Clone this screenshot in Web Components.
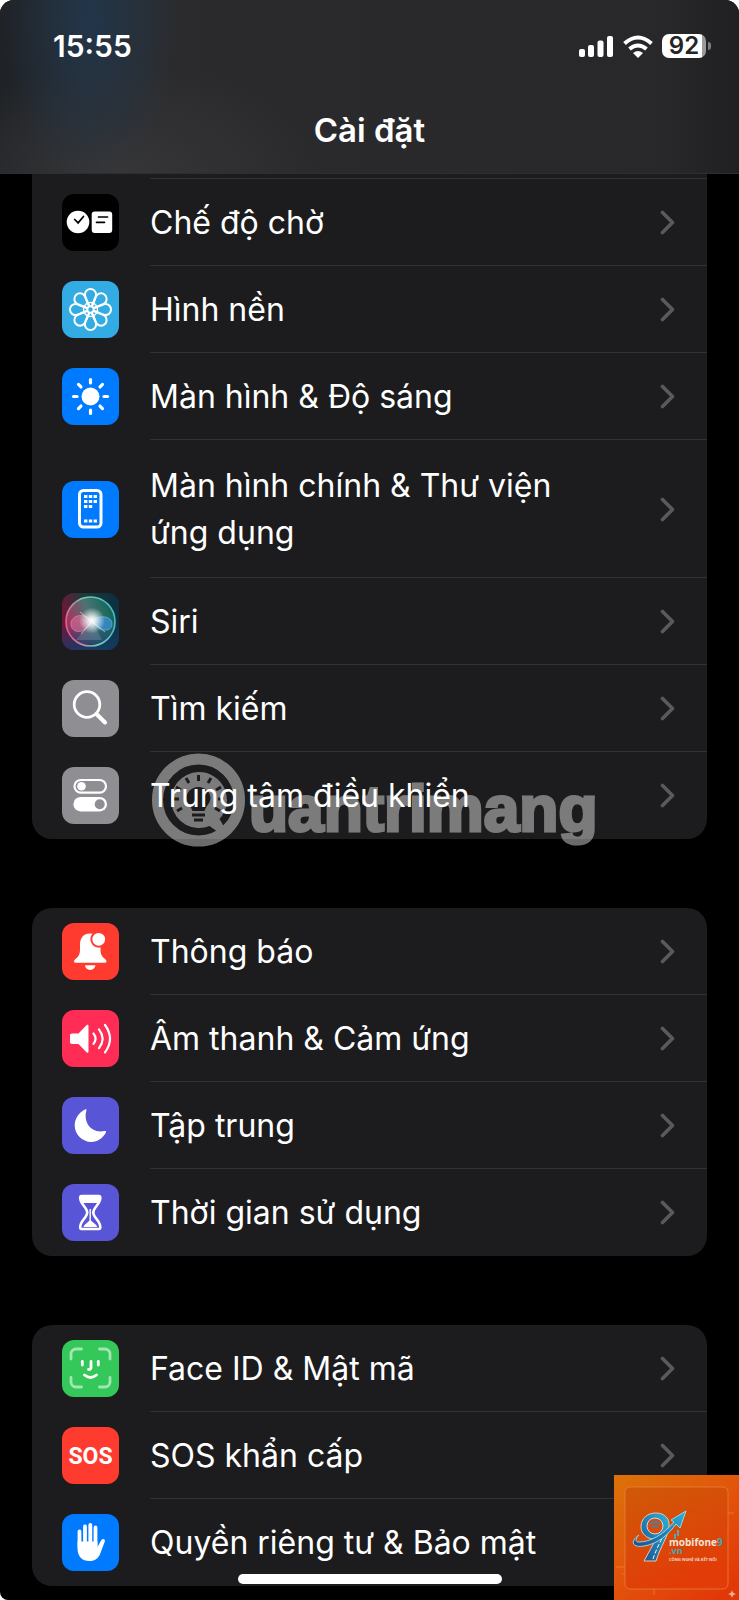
<!DOCTYPE html>
<html lang="vi">
<head>
<meta charset="utf-8">
<meta name="viewport" content="width=device-width, initial-scale=1">
<title>Cài đặt</title>
<style>
  body {
    margin: 0;
    background: #fff;
    font-family: Inter, "Liberation Sans", sans-serif;
    color: #fff;
  }
</style>
</head>
<body>

<settings-screen>
  <status-bar slot="header" time="15:55" battery="92"></status-bar>
  <span slot="title">Cài đặt</span>

  <settings-group continued>
    <settings-row icon="standby" color="#000">Chế độ chờ</settings-row>
    <settings-row icon="wallpaper" color="#32ace2">Hình nền</settings-row>
    <settings-row icon="sun" color="#007aff">Màn hình &amp; Độ sáng</settings-row>
    <settings-row icon="phone" color="#007aff" tall>Màn hình chính &amp; Thư viện ứng dụng</settings-row>
    <settings-row icon="siri" color="#1b2a3a">Siri</settings-row>
    <settings-row icon="search" color="#8e8e93">Tìm kiếm</settings-row>
    <settings-row icon="toggles" color="#8e8e93">Trung tâm điều khiển</settings-row>
    <water-mark slot="overlay">uantrimang</water-mark>
  </settings-group>

  <settings-group>
    <settings-row icon="bell" color="#ff3b30">Thông báo</settings-row>
    <settings-row icon="speaker" color="#ff2d55">Âm thanh &amp; Cảm ứng</settings-row>
    <settings-row icon="moon" color="#5856d6">Tập trung</settings-row>
    <settings-row icon="hourglass" color="#5856d6">Thời gian sử dụng</settings-row>
  </settings-group>

  <settings-group>
    <settings-row icon="face" color="#34c759">Face ID &amp; Mật mã</settings-row>
    <settings-row icon="sos" color="#ff3b30">SOS khẩn cấp</settings-row>
    <settings-row icon="hand" color="#007aff">Quyền riêng tư &amp; Bảo mật</settings-row>
  </settings-group>

  <brand-badge slot="badge"></brand-badge>
</settings-screen>

<script>
const turns = [0, 45, 90, 135, 180, 225, 270, 315];

const icons = {
  standby: `
    <circle cx="16" cy="28" r="11.3" fill="#fff"/>
    <rect x="29.7" y="17.5" width="20.5" height="21.5" rx="3" fill="#fff"/>
    <path d="M12.7 25.5l3.4 3.4 5.4-6.4M36.5 23h9M34.5 28.3h8" fill="none" stroke="#000" stroke-width="1.7" stroke-linecap="round"/>`,
  wallpaper: `
    <g fill="none" stroke="#fff" stroke-width="2">
      ${turns.map((deg) => `<path transform="rotate(${deg} 28.5 28.5)" d="M27 25.5C25.500 21 22.900 17.500 22.900 13.600a5.600 5.600 0 0 1 11.200 0C34.100 17.500 31.500 21 30 25.500"/>`).join("")}
      <circle cx="28.500" cy="28.500" r="3.200"/>
      <circle cx="28.500" cy="28.500" r="7" stroke-width="1.400"/>
    </g>`,
  sun: `
    <circle cx="28.5" cy="28.5" r="9" fill="#fff"/>
    <g stroke="#fff" stroke-width="3.2" stroke-linecap="round">
      ${turns.map((deg) => `<path transform="rotate(${deg} 28.5 28.5)" d="M28.5 11.5V15"/>`).join("")}
    </g>`,
  phone: `
    <rect x="17.5" y="9.5" width="21.5" height="36.5" rx="4" fill="none" stroke="#fff" stroke-width="3"/>
    <path d="M22 15.5h13M22 20.5h13M22 25.5h8.2M22 40h13" stroke="#fff" stroke-width="3.2" stroke-dasharray="3.4 1.4"/>`,
  siri: `
    <defs>
      <linearGradient id="back" x1="0" y1=".6" x2="1" y2=".4">
        <stop offset="0" stop-color="#7b1038"/><stop offset=".45" stop-color="#1f3a3a"/><stop offset="1" stop-color="#0c3040"/>
      </linearGradient>
      <radialGradient id="glow"><stop offset="0" stop-color="#fff"/><stop offset=".3" stop-color="#fff" stop-opacity=".8"/><stop offset="1" stop-color="#fff" stop-opacity="0"/></radialGradient>
      <linearGradient id="rim" x1="0" y1=".7" x2="1" y2=".4"><stop offset="0" stop-color="#f0568c"/><stop offset=".5" stop-color="#79c9ae"/><stop offset="1" stop-color="#46b8c8"/></linearGradient>
      <linearGradient id="orb" x1="0" y1=".6" x2="1" y2=".3"><stop offset="0" stop-color="#b8285c"/><stop offset=".5" stop-color="#4a7474"/><stop offset="1" stop-color="#0c6454"/></linearGradient>
      <linearGradient id="shade" x1="0" y1="0" x2="0" y2="1"><stop offset=".5" stop-color="#123c6c" stop-opacity="0"/><stop offset="1" stop-color="#123c6c" stop-opacity=".8"/></linearGradient>
    </defs>
    <rect width="57" height="57" fill="url(#back)"/>
    <rect width="57" height="57" fill="url(#shade)"/>
    <circle cx="28.5" cy="28.5" r="24.5" fill="url(#orb)"/>
    <circle cx="28.5" cy="28.5" r="24.5" fill="url(#shade)" stroke="url(#rim)" stroke-width="1.6"/>
    <path d="M30 28C22 19 9 22 9 31s13 12 21-3z" fill="#e8709c" fill-opacity=".55" stroke="#f08cb4" stroke-opacity=".6"/>
    <path d="M30 28c6-6 20-6 20 3s-14 8-20-3z" fill="#3c94e0" fill-opacity=".7" stroke="#6cc4f0" stroke-opacity=".6"/>
    <path d="M30 28L14 47h26z" fill="#9cb8c8" opacity=".25"/>
    <circle cx="30" cy="27.5" r="13" fill="url(#glow)"/>
    <path d="M18 19l25 20M30 28L19 41" stroke="#fff" opacity=".5"/>`,
  search: `
    <circle cx="25" cy="24.5" r="12.8" fill="none" stroke="#fff" stroke-width="2.8"/>
    <path d="M34.5 34l8.500 8.500" stroke="#fff" stroke-width="4" stroke-linecap="round"/>`,
  toggles: `
    <rect x="12.5" y="13" width="31.5" height="12.6" rx="6.3" fill="none" stroke="#fff" stroke-width="2.2"/>
    <circle cx="19.5" cy="19.3" r="4.3" fill="#fff"/>
    <rect x="11.4" y="30" width="33.6" height="14.4" rx="7.2" fill="#fff"/>
    <circle cx="37.7" cy="37.2" r="5" fill="#8e8e93"/>`,
  bell: `
    <path d="M28 10.5c-6.500 0-10 4.600-10 11v5c0 5-1.500 7-4.500 9.500-2.500 2.200-1.500 3.800.5 3.800h28.500c2 0 3-1.600.5-3.800-3-2.500-4.500-4.500-4.500-9.500v-5c0-6.400-3.500-11-10.500-11z" fill="#fff"/>
    <path d="M23 42.3h10.4a5.2 4.6 0 0 1-10.4 0z" fill="#fff"/>
    <circle cx="36.7" cy="16.3" r="7.4" fill="#fff" stroke="#ff3b30" stroke-width="2"/>`,
  speaker: `
    <path d="M10 23.5h6.500l8-8.300c.9-.9 2-.4 2 .8v25.500c0 1.200-1.100 1.700-2 .8l-8-8.300H10c-1.200 0-2-.8-2-2v-6.500c0-1.200.8-2 2-2z" fill="#fff"/>
    <path d="M31.500 23.500q4 5.200 0 10.400M37 19.300q7.200 9.400 0 18.800M43 15q10 13.700 0 27.400" fill="none" stroke="#fff" stroke-width="2.200" stroke-linecap="round"/>`,
  moon: `
    <path d="M23 12.5c1-.5 1.700 0 1.400 1.100C21 25 29 37 42.500 34c1.200-.3 1.900.4 1.400 1.500C41 41 35.500 45 29.500 45 20 45 12.700 37 12.700 28.500 12.700 21.500 17 15.500 23 12.500z" fill="#fff"/>`,
  hourglass: `
    <path d="M19.500 12h17.500c1.300 0 1.300 1 1.300 2 0 6-7 9.500-7 14.500s7 8.500 7 14.500c0 1 0 2-1.300 2H19.500c-1.300 0-1.300-1-1.300-2 0-6 7-9.500 7-14.500s-7-8.500-7-14.500c0-1 0-2 1.300-2z" fill="none" stroke="#fff" stroke-width="2.600"/>
    <path d="M18 12h20.500l-2.500 7H20.500z" fill="#fff"/>
    <path d="M28.200 25v13" stroke="#fff" stroke-width="1.400"/>
    <path d="M28.200 36l6 5 1 2H21.500l1-2z" fill="#fff"/>`,
  face: `
    <path d="M9 19v-5a5 5 0 0 1 5-5h5.500M37.500 9H43a5 5 0 0 1 5 5v5M48 37.500V42a5 5 0 0 1-5 5h-5.500M19.500 47H14a5 5 0 0 1-5-5v-4.500" fill="none" stroke="#a4e6b3" stroke-width="2.800" stroke-linecap="round"/>
    <path d="M20.300 21.500v3.500M36.300 21.500v3.500M29 21.500v6q0 2-2.500 2M22.500 35q6 5 12 0" fill="none" stroke="#fff" stroke-width="2.800" stroke-linecap="round"/>`,
  sos: `
    <text x="28.5" y="37" text-anchor="middle" fill="#fff" font-family="Roboto, 'Liberation Sans', sans-serif" font-weight="700" font-size="23">SOS</text>`,
  hand: `
    <path d="M17.500 17.500v16M23 12.500v18M28.300 11v19M33.500 13.500v18" stroke="#fff" stroke-width="3.800" stroke-linecap="round"/>
    <path d="M15.600 27.500h19.800v5.500l4-7c1.200-2 4.300-1 3.400 1.400L38.500 39c-2 5.500-5.500 8-11 8-7.500 0-11.900-4.500-11.900-12z" fill="#fff"/>`,
};

class SettingsScreen extends HTMLElement {
  constructor () {
    super();
    this.attachShadow({ mode: "open" });
    this.shadowRoot.innerHTML = `
      <style>
        :host {
          display: flex;
          flex-direction: column;
          position: relative;
          min-height: 100vh;
          background: #000;
          border-radius: 14px 14px 0 8px;
          overflow: hidden;
        }

        header {
          height: 174px;
          background:
            radial-gradient(ellipse 90px 160px at 90px 20px, rgba(34, 56, 78, .9), transparent),
            radial-gradient(ellipse 200px 110px at 120px 174px, #363638, transparent),
            linear-gradient(90deg, #1f2226, #2b2b2d 20%, #28282a 90%, #202022);
          box-sizing: border-box;
          border-bottom: 1px solid #2e2e30;
        }

        h1 {
          margin: 0;
          padding-top: 38px;
          text-align: center;
          font-size: 33px;
          line-height: 44px;
          font-weight: 600;
        }

        main {
          display: flex;
          flex-direction: column;
          gap: 69px;
          padding: 0 32px 14px;
        }

        .home-indicator {
          position: absolute;
          bottom: 16px;
          left: 50%;
          width: 264px;
          height: 10px;
          margin-left: -132px;
          border-radius: 5px;
          background: #fff;
        }
      </style>
      <header>
        <slot name="header"></slot>
        <h1><slot name="title"></slot></h1>
      </header>
      <main><slot></slot></main>
      <div class="home-indicator"></div>
      <slot name="badge"></slot>
    `;
  }
}

class StatusBar extends HTMLElement {
  constructor () {
    super();
    this.attachShadow({ mode: "open" });
    this.shadowRoot.innerHTML = `
      <style>
        :host {
          display: flex;
          align-items: center;
          justify-content: space-between;
          padding: 22px 28px 0 53px;
          height: 48px;
          font-weight: 600;
        }

        .time {
          font-size: 30px;
        }

        .indicators {
          display: flex;
          align-items: center;
          gap: 9px;
        }

        .battery {
          display: flex;
          align-items: center;
          gap: 2px;
        }

        .level {
          width: 44px;
          height: 24px;
          border-radius: 7px;
          background: linear-gradient(90deg, #fff 92%, #9a9a9c 92%);
          color: #242426;
          font-size: 24px;
          line-height: 24px;
          text-align: center;
        }

        .cap {
          width: 3px;
          height: 8px;
          border-radius: 0 3px 3px 0;
          background: #7d7d7f;
        }
      </style>
      <span class="time"></span>
      <div class="indicators">
        <svg width="35" height="23" viewBox="0 0 35 23" fill="#fff">
          <rect y="14" width="6" height="8" rx="2"/><rect x="9" y="10" width="6" height="12" rx="2"/>
          <rect x="18.5" y="5.5" width="6" height="16.5" rx="2"/><rect x="28" y="1" width="6" height="21" rx="2"/>
        </svg>
        <svg width="30" height="23" viewBox="0 0 30 23">
          <path d="M1.500 8.500q13.500-12 27 0M6.500 14q8.500-7 17 0" fill="none" stroke="#fff" stroke-width="4"/>
          <path d="M10 18q5-4 10 0l-5 5z" fill="#fff"/>
        </svg>
        <div class="battery"><div class="level"></div><div class="cap"></div></div>
      </div>
    `;
  }

  connectedCallback () {
    this.shadowRoot.querySelector(".time").textContent = this.getAttribute("time");
    this.shadowRoot.querySelector(".level").textContent = this.getAttribute("battery");
  }
}

class SettingsGroup extends HTMLElement {
  constructor () {
    super();
    this.attachShadow({ mode: "open" });
    this.shadowRoot.innerHTML = `
      <style>
        :host {
          display: block;
          position: relative;
          background: #1c1c1e;
          border-radius: 20px;
        }

        /* scrolled under the header: only the end of the row above is left */
        :host([continued]) {
          border-radius: 0 0 20px 20px;
        }

        .rest {
          display: none;
          height: 4px;
          margin-left: 118px;
          border-bottom: 1px solid #313134;
        }

        :host([continued]) .rest {
          display: block;
        }

        ::slotted(settings-row:last-of-type) {
          --divider: transparent;
        }
      </style>
      <div class="rest"></div>
      <slot></slot>
      <slot name="overlay"></slot>
    `;
  }
}

class SettingsRow extends HTMLElement {
  constructor () {
    super();
    this.attachShadow({ mode: "open" });
    this.shadowRoot.innerHTML = `
      <style>
        :host {
          display: block;
        }

        a {
          display: flex;
          align-items: center;
          gap: 31px;
          padding-left: 30px;
          color: inherit;
          text-decoration: none;
        }

        .icon {
          flex: none;
          width: 57px;
          height: 57px;
          border-radius: 12px;
        }

        .content {
          flex: 1;
          display: flex;
          align-items: center;
          justify-content: space-between;
          padding: 20px 32px 19px 0;
          border-bottom: 1px solid var(--divider, #313134);
        }

        :host([tall]) .content {
          padding: 22px 32px 21px 0;
        }

        .label {
          max-width: 420px;
          font-size: 32px;
          line-height: 47px;
        }

        .chevron {
          flex: none;
        }
      </style>
      <a href="#">
        <svg class="icon" viewBox="0 0 57 57" aria-hidden="true"></svg>
        <div class="content">
          <span class="label"><slot></slot></span>
          <svg class="chevron" width="15" height="25" viewBox="0 0 15 25" fill="none" stroke="#5a5a5e" stroke-width="3.600" stroke-linecap="round" stroke-linejoin="round"><path d="M2.500 2.500l10 10-10 10"/></svg>
        </div>
      </a>
    `;
  }

  connectedCallback () {
    const icon = this.shadowRoot.querySelector(".icon");
    icon.style.background = this.getAttribute("color");
    icon.innerHTML = icons[this.getAttribute("icon")];
  }
}

class WaterMark extends HTMLElement {
  constructor () {
    super();
    this.attachShadow({ mode: "open" });
    this.shadowRoot.innerHTML = `
      <style>
        :host {
          display: flex;
          position: absolute;
          left: 120px;
          bottom: -8px;
          gap: 3px;
          opacity: .42;
          pointer-events: none;
        }

        span {
          font-family: "Liberation Sans", sans-serif;
          font-size: 64px;
          line-height: 64px;
          font-weight: 700;
          padding-top: 24px;
          -webkit-text-stroke: 3px #fff;
        }
      </style>
      <svg width="94" height="94" viewBox="0 0 94 94">
        <mask id="bulb">
          <rect width="94" height="94" fill="#fff"/>
          <path d="M46.500 34c-7 0-12 5-12 11 0 5 4 7 6 13h12c2-6 6-8 6-13 0-6-5-11-12-11z" fill="#000"/>
          <path d="M46.500 22v6M34 25l3 5M59 25l-3 5M24 34l5 3M69 34l-5 3M21 46h6M66 46h6M25 58l5-3M68 58l-5-3M40 62h13M42 67h9" stroke="#000" stroke-width="3"/>
        </mask>
        <circle cx="46.5" cy="47" r="41" fill="none" stroke="#fff" stroke-width="11"/>
        <path d="M46.500 19a28 28 0 1 0 11 54l7 5c5 2 8-3 6-7l-3-5A28 28 0 0 0 46.500 19z" fill="#fff" mask="url(#bulb)"/>
      </svg>
      <span><slot></slot></span>
    `;
  }
}

class BrandBadge extends HTMLElement {
  constructor () {
    super();
    this.attachShadow({ mode: "open" });
    this.shadowRoot.innerHTML = `
      <style>
        :host {
          display: block;
          position: absolute;
          right: 0;
          bottom: 0;
          width: 125px;
          height: 125px;
        }

        svg {
          display: block;
        }
      </style>
      <svg width="125" height="125" viewBox="0 0 125 125">
        <defs>
          <linearGradient id="bg" x1="0" y1="0" x2=".8" y2="1"><stop offset="0" stop-color="#dc7208"/><stop offset=".5" stop-color="#e2560c"/><stop offset="1" stop-color="#e23808"/></linearGradient>
          <linearGradient id="panel" x1="0" y1="0" x2=".4" y2="1"><stop offset="0" stop-color="#cf5a08"/><stop offset="1" stop-color="#e23c08"/></linearGradient>
          <linearGradient id="blue" x1="0" y1="1" x2="1" y2="0"><stop offset="0" stop-color="#1c4f90"/><stop offset="1" stop-color="#28b4dc"/></linearGradient>
        </defs>
        <rect width="125" height="125" fill="url(#bg)"/>
        <path d="M85 35l18 4M104 38h16M2 92h16M8 99h22M40 108v12" stroke="#f08b3c" opacity=".6"/>
        <rect x="11" y="12" width="103" height="102" rx="5" fill="url(#panel)" stroke="#ea8640" stroke-opacity=".7"/>
        <path d="M30 86l12-22c-8 1-15-5-15-12 0-9 7-14 15-14 9 0 14 6 13 14-1 10-8 18-13 34z" fill="url(#blue)" stroke="#e8c8b0"/>
        <circle cx="41" cy="51" r="8" fill="#db4c0c" stroke="#d8d8d8"/>
        <path d="M36 49q5-4 10 0M38 52q3-2 6 0" fill="none" stroke="#3b86a5" stroke-width="2"/>
        <path d="M39 84q4-12 11-24" fill="none" stroke="#fff" stroke-dasharray="4 2"/>
        <path d="M25 60c-10 7-6 13 5 11 14-2 25-12 32-22l4 4 6-17-15 9 3 2C49 60 36 67 25 67c-4 0-4-3 0-7z" fill="url(#blue)" stroke="#9bd6e0"/>
        <path d="M64 55v6M61 59v5" stroke="#53a8b8" stroke-width="2"/>
        <g font-family="'Open Sans', sans-serif" font-weight="700">
          <text x="55" y="71" font-size="10" fill="#f2e4d8">mobifone<tspan fill="#45a8b8">9</tspan></text>
          <text x="55" y="79" font-size="9" fill="#45a8b8">.vn</text>
          <text x="55" y="86" font-size="4" fill="#f6d8c8">CÔNG NGHỆ VÀ KẾT NỐI</text>
        </g>
        <path d="M118 115q.5 3.500 4 4-3.500.5-4 4-.5-3.500-4-4 3.500-.5 4-4z" fill="#f8b49a"/>
      </svg>
    `;
  }
}

customElements.define("status-bar", StatusBar);
customElements.define("settings-group", SettingsGroup);
customElements.define("settings-row", SettingsRow);
customElements.define("water-mark", WaterMark);
customElements.define("brand-badge", BrandBadge);
customElements.define("settings-screen", SettingsScreen);
</script>
</body>
</html>
